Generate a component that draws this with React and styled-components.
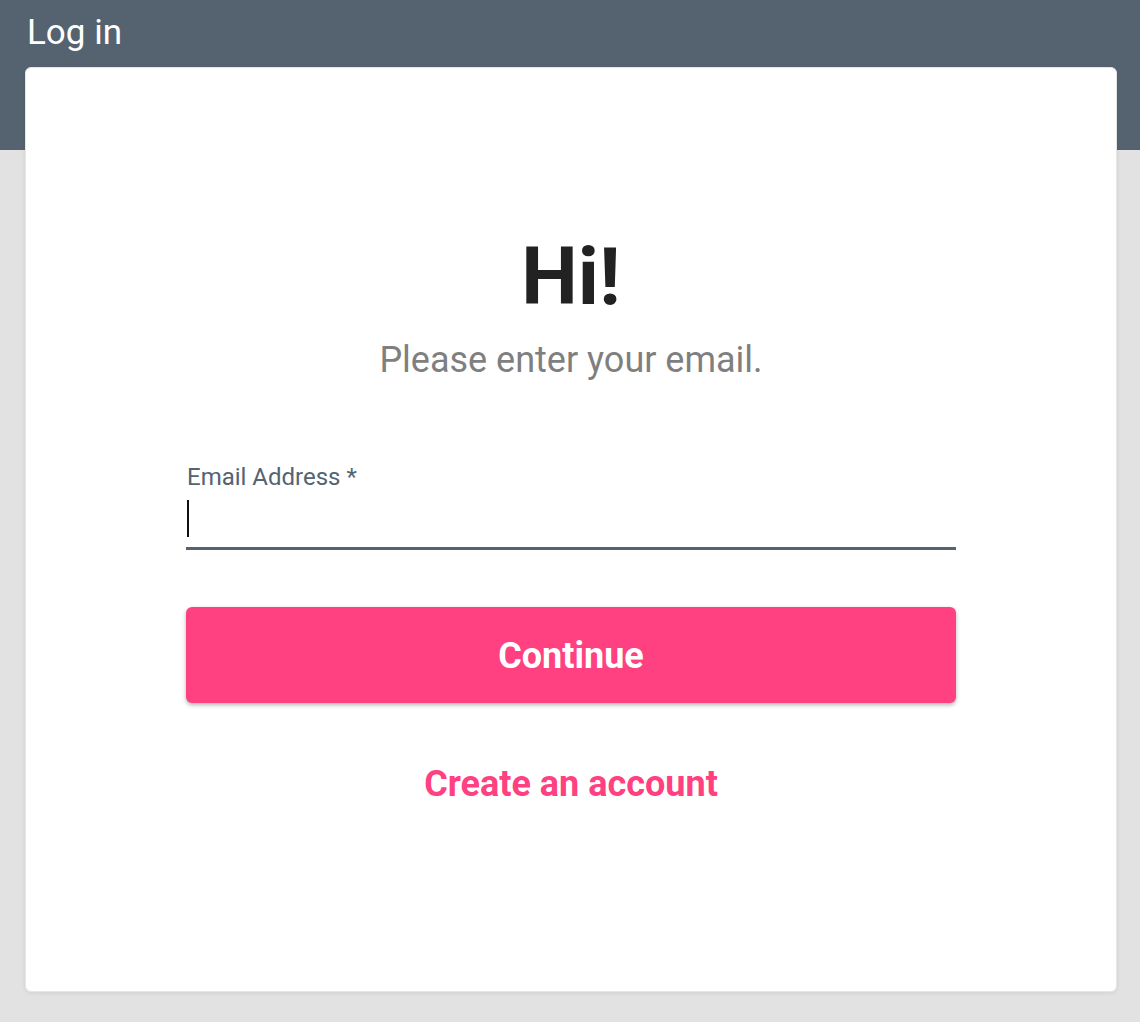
import React from 'react';
import styled, { createGlobalStyle } from 'styled-components';

const GlobalStyle = createGlobalStyle`
    html, body {
        margin: 0;
        padding: 0;
    }
    body {
        font-family: Roboto, "Liberation Sans", Arial, sans-serif;
        background: linear-gradient(#556371 0, #556371 150px, #e2e2e2 150px);
        min-height: 1022px;
    }
    * {
        box-sizing: border-box;
    }
`

const Page = styled.div`
    display: flex;
    flex-direction: column;
    padding: 12px 23px 0 25px;
`

const PageTitle = styled.h1`
    margin: 0 0 13px 2px;
    font-size: 35px;
    font-weight: 400;
    line-height: 42px;
    color: #ffffff;
`

const Card = styled.div`
    background: #ffffff;
    border: 1px solid #e6e6e6;
    border-radius: 6px;
    box-shadow: 0 1px 4px rgba(0, 0, 0, 0.08);
    height: 925px;
    display: flex;
    flex-direction: column;
    align-items: center;
    padding-top: 162px;
`

const Greeting = styled.h2`
    margin: 0;
    font-size: 80px;
    font-weight: 700;
    line-height: 94px;
    color: #222222;
`

const Subtitle = styled.p`
    margin: 15px 0 0;
    font-size: 36px;
    line-height: 42px;
    color: #7f7f7f;
`

const Form = styled.form`
    width: 770px;
    margin-top: 82px;
    display: flex;
    flex-direction: column;
`

const Label = styled.label`
    font-size: 24px;
    line-height: 28px;
    color: #556371;
    margin-left: 1px;
`

const Field = styled.div`
    position: relative;
`

const Input = styled.input`
    display: block;
    width: 100%;
    height: 59px;
    border: none;
    border-bottom: 3px solid #556371;
    outline: none;
    padding: 0;
    font-family: inherit;
    font-size: 32px;
    color: #222222;
    background: transparent;
    caret-color: transparent;
`

const Caret = styled.span`
    position: absolute;
    left: 1px;
    top: 9px;
    width: 2px;
    height: 37px;
    background: #111111;
`

const Button = styled.button`
    margin-top: 57px;
    height: 96px;
    border: none;
    border-radius: 6px;
    background: #ff4081;
    color: #ffffff;
    font-family: inherit;
    font-size: 36px;
    font-weight: 700;
    padding-top: 2px;
    cursor: pointer;
    box-shadow: 0 2px 4px rgba(0, 0, 0, 0.3);
`

const CreateLink = styled.a`
    margin-top: 60px;
    align-self: center;
    font-size: 36px;
    font-weight: 700;
    line-height: 42px;
    color: #ff4081;
    text-decoration: none;
    cursor: pointer;
`

const App = () => {
  return (
    <>
      <GlobalStyle />
      <Page>
        <PageTitle>Log in</PageTitle>
        <Card>
          <Greeting>Hi!</Greeting>
          <Subtitle>Please enter your email.</Subtitle>
          <Form onSubmit={(e) => e.preventDefault()}>
            <Label htmlFor='email'>Email Address *</Label>
            <Field>
              <Input id='email' type='email' />
              <Caret />
            </Field>
            <Button type='submit'>Continue</Button>
            <CreateLink>Create an account</CreateLink>
          </Form>
        </Card>
      </Page>
    </>
  )
}

export default App;
